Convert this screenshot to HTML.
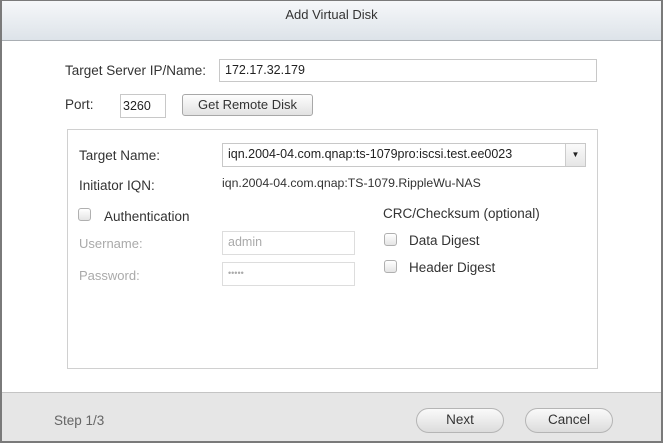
<!DOCTYPE html>
<html><head><style>
*{box-sizing:border-box;margin:0;padding:0}
body{width:663px;height:443px;overflow:hidden;font-family:"Liberation Sans",sans-serif;font-size:12px;color:#333;background:#fff;position:relative}
.frame{position:absolute;left:0;top:0;width:663px;height:443px;border:2px solid #7a7a7a;border-top-width:1px;z-index:10;pointer-events:none}
.title{position:absolute;left:0;top:0;width:663px;height:41px;background:linear-gradient(#f6f8fa,#dde3e9);border-bottom:1px solid #a9aeb3;text-align:center;line-height:30px;font-size:13px;color:#333}
.a{position:absolute;white-space:nowrap;font-size:13.5px}
.inp{position:absolute;border:1px solid #c8c8c8;background:#fff;padding-left:5px;line-height:20px;font-size:12.5px;color:#222;white-space:nowrap}
.btn{position:absolute;border:1px solid #a8a8a8;border-radius:3px;background:linear-gradient(#fdfdfd,#e2e2e2);text-align:center;font-size:13px;color:#333}
.cb{position:absolute;width:13px;height:13px;border:1px solid #b0b0b0;border-radius:3px;background:linear-gradient(#fff,#e4e4e4)}
.grey{color:#aaa}
.footer{position:absolute;left:0;top:392px;width:663px;height:51px;background:#e6e6e6;border-top:1px solid #c4c4c4}
.rb{position:absolute;border:1px solid #b5b5b5;border-radius:13px;background:linear-gradient(#fafafa,#dcdcdc);text-align:center;line-height:22px;font-size:13.5px;color:#333}
</style></head><body>
<div class="title">Add Virtual Disk</div>
<div class="a" style="left:65px;top:63px">Target Server IP/Name:</div>
<div class="inp" style="left:219px;top:59px;width:378px;height:23px">172.17.32.179</div>
<div class="a" style="left:65px;top:97px">Port:</div>
<div class="inp" style="left:120px;top:94px;width:46px;height:24px;padding-left:2px;line-height:22px">3260</div>
<div class="btn" style="left:182px;top:94px;width:131px;height:22px;line-height:20px">Get Remote Disk</div>
<div style="position:absolute;left:67px;top:129px;width:531px;height:240px;border:1px solid #d0d0d0"></div>
<div class="a" style="left:79px;top:148px">Target Name:</div>
<div class="inp" style="left:222px;top:143px;width:364px;height:24px">iqn.2004-04.com.qnap:ts-1079pro:iscsi.test.ee0023
<div style="position:absolute;right:0;top:0;width:20px;height:22px;border-left:1px solid #ccc;background:linear-gradient(#fafafa,#e6e6e6);text-align:center;font-size:8px;line-height:22px">&#9660;</div></div>
<div class="a" style="left:79px;top:178px">Initiator IQN:</div>
<div class="a" style="left:222px;top:176px;font-size:12.3px">iqn.2004-04.com.qnap:TS-1079.RippleWu-NAS</div>
<div class="cb" style="left:78px;top:208px"></div>
<div class="a" style="left:104px;top:209px">Authentication</div>
<div class="a grey" style="left:79px;top:236px;font-size:13px">Username:</div>
<div class="inp grey" style="left:222px;top:231px;width:133px;height:24px;border-color:#ddd">admin</div>
<div class="a grey" style="left:79px;top:268px;font-size:13px">Password:</div>
<div class="inp grey" style="left:222px;top:262px;width:133px;height:24px;border-color:#ddd;font-size:9px">•••••</div>
<div class="a" style="left:383px;top:206px">CRC/Checksum (optional)</div>
<div class="cb" style="left:384px;top:233px"></div>
<div class="a" style="left:409px;top:233px">Data Digest</div>
<div class="cb" style="left:384px;top:260px"></div>
<div class="a" style="left:409px;top:260px">Header Digest</div>
<div class="footer">
<div class="a" style="left:54px;top:20px;color:#666">Step 1/3</div>
<div class="rb" style="left:416px;top:15px;width:88px;height:25px">Next</div>
<div class="rb" style="left:525px;top:15px;width:88px;height:25px">Cancel</div>
</div>
<div class="frame"></div>
</body></html>
